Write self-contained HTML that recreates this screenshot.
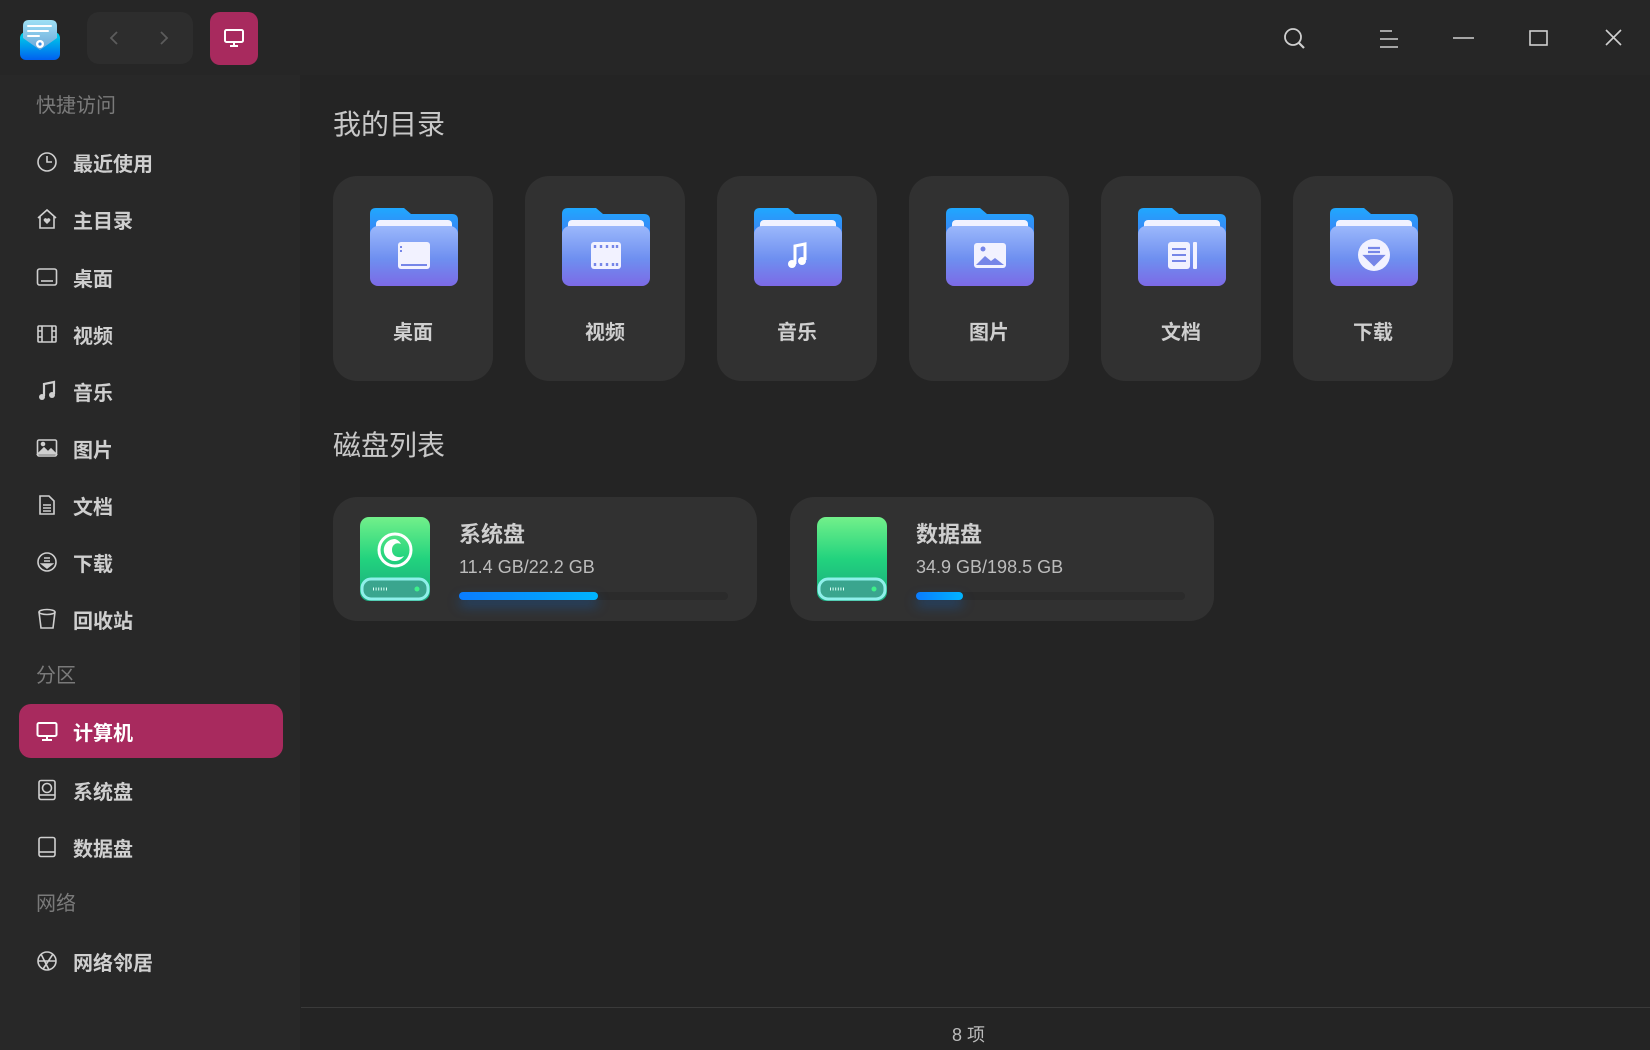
<!DOCTYPE html>
<html><head><meta charset="utf-8"><style>
*{margin:0;padding:0;box-sizing:border-box}
body{width:1650px;height:1050px;background:#242424;font-family:"Liberation Sans","Noto Sans CJK SC",sans-serif;position:relative;overflow:hidden;color:#c8c8c8}
.abs{position:absolute}
#side{left:0;top:0;width:300px;height:1050px;background:#282828}
#top{left:0;top:0;width:1650px;height:75px;background:#262626}
.hdr{position:absolute;left:36px;font-size:20px;color:#7a7a7a;line-height:24px}
.it{position:absolute;left:19px;width:264px;height:54px;display:flex;align-items:center;font-size:20px;color:#cfcfcf;font-weight:bold}
.it svg{position:absolute;left:17px;top:16px}
.it span{position:absolute;left:54px}
.it.act{background:#a82a5e;border-radius:12px;color:#fff}
.card{position:absolute;top:176px;width:160px;height:205px;background:#313131;border-radius:24px}
.card svg{position:absolute;left:37px;top:32px}
.card div{position:absolute;top:140px;width:100%;text-align:center;font-size:20px;color:#cfcfcf;font-weight:bold}
.h1{position:absolute;left:333px;font-size:28px;color:#c8c8c8;line-height:34px}
.disk{position:absolute;top:497px;width:424px;height:124px;background:#313131;border-radius:24px}
.disk .t{position:absolute;left:126px;top:20px;font-size:22px;color:#cfcfcf;font-weight:bold}
.disk .s{position:absolute;left:126px;top:60px;font-size:18px;color:#bcbcbc}
.disk .tr{position:absolute;left:126px;top:95px;width:269px;height:8px;border-radius:4px;background:#2b2b2b}
.disk .f{position:absolute;left:0;top:0;height:8px;border-radius:4px;background:linear-gradient(90deg,#0a7cff,#00b4ff);box-shadow:0 6px 12px rgba(0,120,255,.35)}
.disk svg{position:absolute;left:27px;top:20px}
</style></head><body>
<div class="abs" id="side"></div>
<div class="abs" id="top"></div>

<!-- titlebar -->
<svg class="abs" style="left:19px;top:18px" width="42" height="42" viewBox="0 0 42 42">
<defs><linearGradient id="lg" x1="0" y1="0" x2="0" y2="1"><stop offset="0" stop-color="#00d8e8"/><stop offset="1" stop-color="#0060f0"/></linearGradient>
<linearGradient id="lp" x1="0" y1="0" x2="0" y2="1"><stop offset="0" stop-color="#9ee0f5"/><stop offset="1" stop-color="#6aa5d8"/></linearGradient></defs>
<rect x="1" y="14" width="40" height="28" rx="6" fill="url(#lg)"/>
<path d="M4 8 Q4 2 10 2 H32 Q38 2 38 8 V20 L21 32 L4 20Z" fill="url(#lp)"/>
<path d="M9 8H32M9 13H29M9 18H20" stroke="#fff" stroke-width="2" stroke-linecap="round"/>
<circle cx="21" cy="26" r="4" fill="#fff"/><circle cx="21" cy="26" r="1.6" fill="#3a8ee8"/>
</svg>
<div class="abs" style="left:87px;top:12px;width:106px;height:52px;background:#2d2d2d;border-radius:12px"></div>
<svg class="abs" style="left:87px;top:12px" width="106" height="52"><path d="M30 20l-6 6 6 6M74 20l6 6-6 6" stroke="#5c5c5c" stroke-width="1.8" fill="none"/></svg>
<div class="abs" style="left:210px;top:12px;width:48px;height:53px;background:#a82a5e;border-radius:10px"></div>
<svg class="abs" style="left:222px;top:26px" width="24" height="24" viewBox="0 0 24 24"><rect x="3" y="4" width="18" height="12" rx="1.5" stroke="#fff" stroke-width="2" fill="none"/><path d="M12 16v3M8 20h8" stroke="#fff" stroke-width="2"/></svg>
<svg class="abs" style="left:1280px;top:24px" width="360" height="30">
<circle cx="13" cy="13" r="8" stroke="#cfcfcf" stroke-width="1.8" fill="none"/><path d="M19 19l5 5" stroke="#cfcfcf" stroke-width="2.2"/>
<path d="M100 7h12M100 15h18M100 23h18" stroke="#cfcfcf" stroke-width="1.6"/>
<path d="M173 14h21" stroke="#cfcfcf" stroke-width="1.6"/>
<rect x="250" y="7" width="17" height="14" stroke="#cfcfcf" stroke-width="1.6" fill="none"/>
<path d="M326 6l15 15M341 6l-15 15" stroke="#cfcfcf" stroke-width="1.6"/>
</svg>

<!-- sidebar -->
<div class="hdr" style="top:94px">快捷访问</div>
<div class="it" style="top:135px"><svg width="22" height="22" viewBox="0 0 22 22" fill="none" stroke="#cfcfcf" stroke-width="1.6"><circle cx="11" cy="11" r="9"/><path d="M11 5v6h5"/></svg><span>最近使用</span></div>
<div class="it" style="top:192px"><svg width="22" height="22" viewBox="0 0 22 22" fill="none" stroke="#cfcfcf" stroke-width="1.6"><path d="M2 10L11 2l9 8M4 8v12h14V8"/><path d="M11 16l-3-3a1.8 1.8 0 013-2 1.8 1.8 0 013 2z" fill="#cfcfcf" stroke="none"/></svg><span>主目录</span></div>
<div class="it" style="top:250px"><svg width="22" height="22" viewBox="0 0 22 22" fill="none" stroke="#cfcfcf" stroke-width="1.6"><rect x="1.5" y="3" width="19" height="16" rx="2"/><path d="M5 15h12"/></svg><span>桌面</span></div>
<div class="it" style="top:307px"><svg width="22" height="22" viewBox="0 0 22 22" fill="none" stroke="#cfcfcf" stroke-width="1.6"><rect x="2" y="3" width="18" height="16" rx="1"/><path d="M6 3v16M16 3v16M2 8h4M2 14h4M16 8h4M16 14h4"/></svg><span>视频</span></div>
<div class="it" style="top:364px"><svg width="22" height="22" viewBox="0 0 22 22"><path d="M8 16V4l10-2v12" stroke="#cfcfcf" stroke-width="2.2" fill="none"/><circle cx="6" cy="17" r="3" fill="#cfcfcf"/><circle cx="16" cy="15" r="3" fill="#cfcfcf"/></svg><span>音乐</span></div>
<div class="it" style="top:421px"><svg width="22" height="22" viewBox="0 0 22 22" fill="none" stroke="#cfcfcf" stroke-width="1.6"><rect x="1.5" y="3" width="19" height="16" rx="1.5"/><path d="M2 17l6-6 4 4 3-3 5 5z" fill="#cfcfcf"/><circle cx="7" cy="7" r="1.5" fill="#cfcfcf"/></svg><span>图片</span></div>
<div class="it" style="top:478px"><svg width="22" height="22" viewBox="0 0 22 22" fill="none" stroke="#cfcfcf" stroke-width="1.6"><path d="M4 2h9l5 5v13H4z"/><path d="M7 11h8M7 14h8M7 17h8"/></svg><span>文档</span></div>
<div class="it" style="top:535px"><svg width="22" height="22" viewBox="0 0 22 22" fill="none" stroke="#cfcfcf" stroke-width="1.6"><circle cx="11" cy="11" r="9"/><path d="M8 7h6M8 10h6M6 13h10l-5 4z" fill="#cfcfcf"/></svg><span>下载</span></div>
<div class="it" style="top:592px"><svg width="22" height="22" viewBox="0 0 22 22" fill="none" stroke="#cfcfcf" stroke-width="1.6"><ellipse cx="11" cy="4" rx="8" ry="2.5"/><path d="M3 4l2 16h12l2-16"/></svg><span>回收站</span></div>
<div class="hdr" style="top:664px">分区</div>
<div class="it act" style="top:704px"><svg width="22" height="22" viewBox="0 0 22 22" fill="none" stroke="#fff" stroke-width="2"><rect x="1.5" y="3" width="19" height="13" rx="1.5"/><path d="M11 16v3M6 20h10"/></svg><span>计算机</span></div>
<div class="it" style="top:763px"><svg width="22" height="22" viewBox="0 0 22 22" fill="none" stroke="#cfcfcf" stroke-width="1.6"><rect x="3" y="1.5" width="16" height="19" rx="2"/><circle cx="11" cy="9" r="4.5"/><path d="M3 16h16"/></svg><span>系统盘</span></div>
<div class="it" style="top:820px"><svg width="22" height="22" viewBox="0 0 22 22" fill="none" stroke="#cfcfcf" stroke-width="1.6"><rect x="3" y="1.5" width="16" height="19" rx="2"/><path d="M3 16h16"/></svg><span>数据盘</span></div>
<div class="hdr" style="top:892px">网络</div>
<div class="it" style="top:934px"><svg width="22" height="22" viewBox="0 0 22 22" fill="none" stroke="#cfcfcf" stroke-width="1.6"><circle cx="11" cy="11" r="9"/><path d="M5 4l8 16M17 4L7 19M2 11h18"/></svg><span>网络邻居</span></div>

<!-- main -->
<div class="h1" style="top:108px">我的目录</div>
<svg width="0" height="0" style="position:absolute"><defs>
<linearGradient id="fb" x1="0" y1="0" x2="0" y2="1"><stop offset="0" stop-color="#1fa8ff"/><stop offset="1" stop-color="#3f7df2"/></linearGradient>
<linearGradient id="ff" x1="0" y1="0" x2="0" y2="1"><stop offset="0" stop-color="#9bb8fb"/><stop offset=".55" stop-color="#6e8ff0"/><stop offset="1" stop-color="#7c6ae6"/></linearGradient>
<symbol id="fold" viewBox="0 0 88 78"><path d="M0 6Q0 0 6 0H34l7 6H82Q88 6 88 12V30H0z" fill="url(#fb)"/><rect x="6" y="12" width="76" height="20" rx="4" fill="#f0f2ff"/><rect x="0" y="18" width="88" height="60" rx="8" fill="url(#ff)"/></symbol>
</defs></svg>

<div class="card" style="left:333px"><svg width="88" height="78"><use href="#fold"/><rect x="28" y="34" width="32" height="27" rx="3" fill="#f2f2ff"/><path d="M31 38v2M31 42v2M31 57h26" stroke="#7686e8" stroke-width="2"/></svg><div>桌面</div></div>
<div class="card" style="left:525px"><svg width="88" height="78"><use href="#fold"/><rect x="29" y="34" width="30" height="27" rx="3" fill="#f2f2ff"/><path d="M33 37v3M39 37v3M45 37v3M51 37v3M33 55v3M39 55v3M45 55v3M51 55v3M55 37v3M55 55v3" stroke="#7686e8" stroke-width="2.4"/></svg><div>视频</div></div>
<div class="card" style="left:717px"><svg width="88" height="78"><use href="#fold"/><path d="M41 56V38l10-2v16" stroke="#fff" stroke-width="3" fill="none"/><circle cx="38" cy="56" r="4" fill="#fff"/><circle cx="48" cy="53" r="4" fill="#fff"/></svg><div>音乐</div></div>
<div class="card" style="left:909px"><svg width="88" height="78"><use href="#fold"/><rect x="28" y="35" width="32" height="25" rx="3" fill="#f2f2ff"/><path d="M30 57l9-9 6 5 4-3 9 7z" fill="#7686e8"/><circle cx="37" cy="41" r="2.5" fill="#7686e8"/></svg><div>图片</div></div>
<div class="card" style="left:1101px"><svg width="88" height="78"><use href="#fold"/><rect x="30" y="34" width="22" height="27" rx="3" fill="#f2f2ff"/><rect x="55" y="34" width="4" height="27" rx="1" fill="#f2f2ff"/><path d="M34 41h14M34 47h14M34 53h14" stroke="#7686e8" stroke-width="2"/></svg><div>文档</div></div>
<div class="card" style="left:1293px"><svg width="88" height="78"><use href="#fold"/><circle cx="44" cy="47" r="16" fill="#f2f2ff"/><path d="M38 40h12M38 44h12M35 48h18l-9 9z" stroke="#7686e8" stroke-width="2.2" fill="#7686e8"/></svg><div>下载</div></div>

<div class="h1" style="top:429px">磁盘列表</div>
<svg width="0" height="0" style="position:absolute"><defs>
<linearGradient id="dg" x1="0" y1="0" x2="0" y2="1"><stop offset="0" stop-color="#72f08a"/><stop offset=".5" stop-color="#22d37e"/><stop offset="1" stop-color="#1aa97e"/></linearGradient>
<symbol id="drv" viewBox="0 0 70 84"><rect x="0" y="0" width="70" height="84" rx="9" fill="url(#dg)"/><rect x="2" y="62" width="66" height="20" rx="9" fill="#3aa58e" stroke="#8ef0ea" stroke-width="3"/><path d="M13 72h14" stroke="#d8fff6" stroke-width="3" stroke-dasharray="1 1.6"/><circle cx="57" cy="72" r="2.5" fill="#3ef08a"/></symbol>
</defs></svg>
<div class="disk" style="left:333px"><svg width="70" height="84"><use href="#drv"/><circle cx="35" cy="33" r="16" fill="none" stroke="#fff" stroke-width="3"/><path d="M35 22a11 11 0 1 0 9 17c-6 3-12 0-12-6s5-8 9-6c-2-4-6-5-6-5z" fill="#fff"/></svg><div class="t">系统盘</div><div class="s">11.4 GB/22.2 GB</div><div class="tr"><div class="f" style="width:139px"></div></div></div>
<div class="disk" style="left:790px"><svg width="70" height="84"><use href="#drv"/></svg><div class="t">数据盘</div><div class="s">34.9 GB/198.5 GB</div><div class="tr"><div class="f" style="width:47px"></div></div></div>

<div class="abs" style="left:301px;top:1007px;width:1349px;height:1px;background:#3a3a3a"></div>
<div class="abs" style="left:952px;top:1021px;font-size:18px;color:#bcbcbc">8 项</div>
</body></html>
